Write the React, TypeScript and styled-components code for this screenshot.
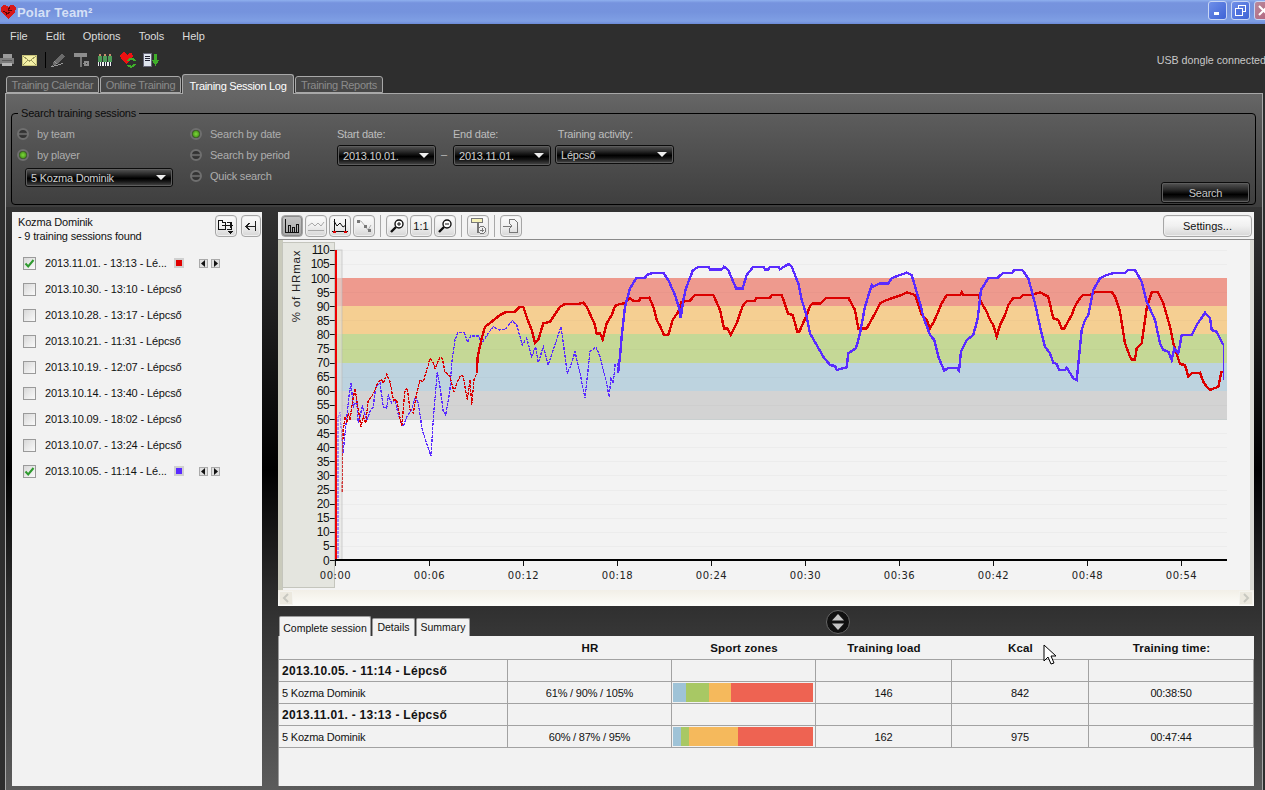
import React from "react";
import styled, { createGlobalStyle } from "styled-components";

const GlobalStyle = createGlobalStyle`
  html, body { margin: 0; padding: 0; background: #2e2e2e; }
  * { box-sizing: border-box; }
`;

const UI_FONT = `"Liberation Sans", Arial, sans-serif`;

const Window = styled.div`
  position: relative;
  width: 1265px;
  height: 790px;
  overflow: hidden;
  display: flex;
  flex-direction: column;
  background: #2e2e2e;
  font-family: ${UI_FONT};
  font-size: 11px;
`;

const TitleBar = styled.div`
  height: 24px;
  flex: none;
  display: flex;
  align-items: center;
  background: linear-gradient(to bottom, #8fb0ee 0, #7693de 12%, #7593dd 50%, #7f9fe4 88%, #6c8ad8 100%);
`;

const AppName = styled.span`
  margin-left: 1px;
  font-size: 13px;
  font-weight: bold;
  letter-spacing: 0.2px;
  color: #d5e0f6;
`;

const WindowButtons = styled.div`
  margin-left: auto;
  margin-right: -8px;
  display: flex;
  gap: 4px;
  align-self: flex-start;
  margin-top: 1px;
`;

const WindowButton = styled.div<{ $close?: boolean }>`
  width: 19px;
  height: 19px;
  border: 1px solid #c8d6f5;
  border-radius: 3px;
  background: ${(p) => (p.$close ? "linear-gradient(135deg, #b98a9c, #b0607a)" : "linear-gradient(135deg, #6f8fe8, #3e63d6)")};
  display: flex;
  align-items: center;
  justify-content: center;
  color: #fff;
`;

const MenuBar = styled.div`
  height: 21px;
  flex: none;
  display: flex;
  align-items: center;
  gap: 18px;
  padding: 2px 0 0 10px;
  color: #dcdcdc;
  font-size: 11px;
`;

const ToolStrip = styled.div`
  height: 29px;
  flex: none;
  display: flex;
  align-items: center;
  padding-top: 1px;
`;

const StripIcon = styled.svg<{ $left: number }>`
  width: 16px;
  height: 16px;
  margin-left: ${(p) => p.$left}px;
  flex: none;
  shape-rendering: crispEdges;
`;

const StripDivider = styled.div`
  width: 1px;
  height: 16px;
  margin-left: 7px;
  background: #000;
  flex: none;
`;

const DongleStatus = styled.span`
  margin-left: auto;
  margin-right: -1px;
  color: #c8c8c8;
  font-size: 10.7px;
  white-space: nowrap;
`;

const TopTabs = styled.div`
  height: 19px;
  flex: none;
  display: flex;
  align-items: flex-end;
  padding-left: 6px;
  gap: 1px;
  position: relative;
  z-index: 1;
`;

const TopTab = styled.div<{ $active?: boolean; $width: number }>`
  width: ${(p) => p.$width}px;
  height: ${(p) => (p.$active ? 20 : 17)}px;
  margin-bottom: ${(p) => (p.$active ? -1 : 0)}px;
  padding-top: ${(p) => (p.$active ? 3 : 0)}px;
  border: 1px solid #a8a8a8;
  border-bottom: ${(p) => (p.$active ? "none" : "1px solid #a8a8a8")};
  border-radius: 3px 3px 0 0;
  background: ${(p) => (p.$active ? "#666" : "#474747")};
  color: ${(p) => (p.$active ? "#fff" : "#8b8b8b")};
  font-size: 11px;
  letter-spacing: -0.3px;
  display: flex;
  align-items: center;
  justify-content: center;
  white-space: nowrap;
`;

const TabPanel = styled.div`
  flex: 1;
  min-height: 0;
  margin: 0 2px 0 5px;
  border: 1px solid #a8a8a8;
  border-bottom: none;
  display: flex;
  flex-direction: column;
`;

const SearchArea = styled.div`
  height: 113px;
  flex: none;
  padding: 12px 6px 0 5px;
  background: linear-gradient(to bottom, #666 0, #5a5a5a 25%, #3e3e3e 100%);
`;

const SearchBox = styled.fieldset`
  margin: 0;
  padding: 0 5px 2px 5px;
  height: 99px;
  border: 1px solid #000;
  border-radius: 4px;
  min-width: 0;
`;

const SearchLegend = styled.legend`
  padding: 0 3px;
  margin-left: 1px;
  height: 14px;
  line-height: 14px;
  color: #0c0c0c;
  font-size: 11px;
  letter-spacing: -0.2px;
`;

const SearchRow = styled.div`
  display: flex;
  height: 83px;
  padding-top: 8px;
  align-items: flex-start;
  letter-spacing: -0.22px;
`;

const RadioColumn = styled.div<{ $width: number }>`
  width: ${(p) => p.$width}px;
  flex: none;
  display: flex;
  flex-direction: column;
  gap: 9px;
`;

const RadioLine = styled.div`
  height: 12px;
  display: flex;
  align-items: center;
  gap: 8px;
  color: #adadad;
  white-space: nowrap;
`;

const RadioDot = styled.span<{ $on?: boolean }>`
  width: 12px;
  height: 12px;
  flex: none;
  border-radius: 50%;
  border: 2px solid #6f6f6f;
  background: ${(p) =>
    p.$on
      ? "radial-gradient(circle, #7fd63c 0, #55a822 45%, #2c3a22 75%)"
      : "linear-gradient(to bottom, #333 0, #333 30%, #666 45%, #666 55%, #333 70%)"};
`;

const Combo = styled.div<{ $width: number; $height?: number }>`
  width: ${(p) => p.$width}px;
  height: ${(p) => p.$height ?? 21}px;
  flex: none;
  border: 1px solid #0c0c0c;
  border-radius: 3px;
  outline: 1px solid #5d5d5d;
  outline-offset: -2px;
  background: linear-gradient(to bottom, #575757 0, #2a2a2a 30%, #000 55%, #111 70%, #4a4a4a 100%);
  color: #cfcfcf;
  display: flex;
  align-items: center;
  padding: 0 6px 0 5px;
  white-space: nowrap;
  font-size: 11px;
`;

const ComboArrow = styled.span`
  margin-left: auto;
  width: 0;
  height: 0;
  border-left: 5px solid transparent;
  border-right: 5px solid transparent;
  border-top: 5px solid #eee;
`;

const PlayerCombo = styled(Combo)`
  margin: -2px 0 0 8px;
`;

const FieldColumn = styled.div<{ $left: number }>`
  flex: none;
  margin-left: ${(p) => p.$left}px;
  display: flex;
  flex-direction: column;
  gap: 5px;
  color: #bdbdbd;
  white-space: nowrap;
`;

const FieldDash = styled.span`
  flex: none;
  margin: 20px 0 0 5px;
  color: #bdbdbd;
  width: 11px;
`;

const SearchButton = styled.div`
  margin-left: auto;
  align-self: flex-end;
  width: 89px;
  height: 21px;
  flex: none;
  border: 1px solid #0c0c0c;
  border-radius: 3px;
  outline: 1px solid #5d5d5d;
  outline-offset: -2px;
  background: linear-gradient(to bottom, #555 0, #2a2a2a 35%, #000 60%, #111 75%, #444 100%);
  color: #c4c4c4;
  display: flex;
  align-items: center;
  justify-content: center;
`;

const Body = styled.div`
  flex: 1;
  min-height: 0;
  display: flex;
  gap: 16px;
  padding: 5px 0 4px 6px;
  background: linear-gradient(to bottom, #333 0, #000 45%, #2c2c2c 66%, #5c5c5c 100%);
`;

const SessionPanel = styled.div`
  width: 250px;
  flex: none;
  background: #f2f2f2;
  color: #111;
  display: flex;
  flex-direction: column;
`;

const SessionHeader = styled.div`
  height: 38px;
  flex: none;
  display: flex;
  padding: 3px 1px 0 6px;
`;

const SessionTitle = styled.div`
  line-height: 13.5px;
  padding-top: 1px;
  font-size: 11px;
  letter-spacing: -0.18px;
`;

const HeaderButtons = styled.div`
  margin-left: auto;
  display: flex;
  gap: 4px;
`;

const SessionList = styled.div`
  display: flex;
  flex-direction: column;
  gap: 6px;
  padding: 3px 0 0 11px;
`;

const SessionRow = styled.div`
  height: 20px;
  display: flex;
  align-items: center;
  white-space: nowrap;
  font-size: 11px;
  letter-spacing: -0.15px;
`;

const CheckBox = styled.span`
  width: 13px;
  height: 13px;
  flex: none;
  margin-right: 9px;
  border: 1px solid #9a9a9a;
  background: linear-gradient(135deg, #d8d8d8, #fafafa);
  display: flex;
  align-items: center;
  justify-content: center;
`;

const Swatch = styled.span<{ $color: string }>`
  width: 10px;
  height: 10px;
  flex: none;
  margin-left: 7px;
  border: 2px solid #d0d0d0;
  background: ${(p) => p.$color};
`;

const StepButton = styled.span`
  width: 9px;
  height: 9px;
  flex: none;
  border: 1px solid #aaa;
  background: #e0e0e0;
  display: flex;
  align-items: center;
  justify-content: center;
`;

const StepGroup = styled.span`
  display: flex;
  gap: 3px;
  margin-left: 15px;
`;

const MainColumn = styled.div`
  width: 976px;
  flex: none;
  display: flex;
  flex-direction: column;
`;

const ChartToolbar = styled.div`
  height: 28px;
  flex: none;
  display: flex;
  align-items: flex-start;
  gap: 2px;
  padding: 3px 2px 0 3px;
  background: #f3f3f3;
  border-bottom: 1px solid #8a8a8a;
`;

const ToolButton = styled.div<{ $active?: boolean }>`
  width: 22px;
  height: 22px;
  flex: none;
  border: 1px solid #a6a6a6;
  border-radius: 4px;
  background: ${(p) =>
    p.$active ? "linear-gradient(to bottom, #c4c4c4, #a8a8a8)" : "linear-gradient(to bottom, #fbfbfb 0, #f0f0f0 50%, #d6d6d6 100%)"};
  display: flex;
  align-items: center;
  justify-content: center;
  color: #111;
  font-size: 11px;
  box-shadow: ${(p) => (p.$active ? "inset 0 0 0 1px #8c8c8c" : "inset 0 0 0 1px #efefef")};
`;

const ToolSeparator = styled.div`
  width: 1px;
  height: 22px;
  flex: none;
  margin: 0 3px;
  background: #a8a8a8;
`;

const SettingsButton = styled(ToolButton)`
  width: 89px;
  margin-left: auto;
`;

const NarrowButton = styled(ToolButton)`
  width: 20px;
`;

const ChartFrame = styled.svg`
  width: 976px;
  height: 350px;
  flex: none;
  display: block;
  background: #f3f3f3;
`;

const ScrollRow = styled.div`
  height: 16px;
  flex: none;
  display: flex;
  justify-content: space-between;
  padding: 1px 1px 0;
  background: linear-gradient(to bottom, #f2efe7, #fdfdfa);
`;

const ScrollButton = styled.div`
  width: 14px;
  height: 14px;
  background: #ece9df;
  border: 1px solid #f4f3ee;
  display: flex;
  align-items: center;
  justify-content: center;
`;

const LowerStrip = styled.div`
  height: 30px;
  flex: none;
  display: flex;
  align-items: flex-end;
  padding-left: 1px;
`;

const LowerTab = styled.div<{ $active?: boolean; $width: number }>`
  width: ${(p) => p.$width}px;
  height: ${(p) => (p.$active ? 20 : 18)}px;
  margin-right: 1px;
  padding: ${(p) => (p.$active ? "3px 0 0" : "0 0 1px")};
  background: #f2f2f2;
  border: 1px solid #9a9a9a;
  border-bottom: none;
  border-radius: 2px 2px 0 0;
  color: #111;
  font-size: 10.5px;
  display: flex;
  align-items: center;
  justify-content: center;
  white-space: nowrap;
`;

const SplitHandle = styled.svg`
  width: 24px;
  height: 24px;
  flex: none;
  align-self: flex-start;
  margin: 4px 0 0 355px;
`;

const SummaryTable = styled.div`
  height: 150px;
  flex: none;
  background: #f2f2f2;
  border-left: 1px solid #9a9a9a;
  color: #111;
`;

const TableRow = styled.div<{ $header?: boolean }>`
  display: grid;
  grid-template-columns: 229px 164px 144px 136px 137px 165px;
  height: ${(p) => (p.$header ? 24 : 22)}px;
`;

const TableCell = styled.div<{ $header?: boolean; $bold?: boolean; $left?: boolean }>`
  display: flex;
  align-items: center;
  justify-content: ${(p) => (p.$left ? "flex-start" : "center")};
  padding-left: ${(p) => (p.$left ? 3 : 0)}px;
  border-bottom: 1px solid #a2a2a2;
  border-right: ${(p) => (p.$header ? "none" : "1px solid #a2a2a2")};
  font-weight: ${(p) => (p.$header || p.$bold ? "bold" : "normal")};
  font-size: ${(p) => (p.$bold ? 12 : p.$header ? 11.5 : 11)}px;
  letter-spacing: ${(p) => (p.$bold ? 0.3 : p.$header ? 0.15 : -0.2)}px;
  white-space: nowrap;
`;

const ZoneBar = styled.div`
  display: flex;
  width: 140px;
  height: 19px;
  margin-right: 2px;
`;

const ZoneSegment = styled.div<{ $color: string; $width: number }>`
  width: ${(p) => p.$width}px;
  background: ${(p) => p.$color};
`;

const MouseCursor = styled.svg`
  position: absolute;
  left: 1043px;
  top: 644px;
  width: 14px;
  height: 22px;
`;

/* chart data, read off in page pixels through a crop origin at 3x */
const crop = (x0: number, y0: number, pts: number[][]) =>
  pts.map(([x, y]) => [x0 + x / 3, y0 + y / 3]);

const toPoints = (pts: number[][]) => pts.map(([x, y]) => `${x.toFixed(1)},${y.toFixed(1)}`).join(" ");

const redDashed = [
  [342, 492],
  [343, 430],
  ...crop(275, 210, [
    [205, 660], [210, 620], [215, 640], [220, 610], [225, 630], [232, 580], [240, 535], [245, 570], [250, 600],
    [258, 650], [265, 620], [272, 640], [280, 570], [290, 560], [300, 540], [310, 515], [320, 510], [325, 520],
    [335, 492], [345, 515], [355, 570], [365, 570], [380, 650], [390, 540], [397, 535], [405, 600], [415, 610],
    [425, 550], [435, 510], [445, 515], [465, 445], [475, 460], [480, 475], [495, 442], [502, 445], [510, 485],
    [525, 500], [537, 545], [545, 520], [557, 495], [565, 500], [577, 570], [585, 510], [590, 585], [597, 510],
    [605, 490],
  ]),
];

const redSolid = [
  ...crop(275, 210, [
    [605, 490], [608, 440], [620, 385], [630, 350], [650, 335], [675, 315], [695, 305], [720, 305], [735, 290],
    [745, 290], [760, 335], [770, 360], [780, 398], [790, 390], [805, 340], [825, 335], [855, 290], [870, 282],
    [910, 282], [925, 278], [935, 290], [960, 345], [965, 372],
  ]),
  ...crop(600, 240, [
    [0, 280], [8, 298], [20, 250], [35, 225], [45, 198], [60, 192], [75, 190], [90, 175], [100, 182], [118, 182],
    [120, 175], [148, 173], [160, 200], [170, 240], [180, 258], [192, 285], [205, 285], [218, 240], [235, 215],
    [245, 185], [270, 182], [285, 165], [340, 165], [360, 210], [372, 265], [382, 265], [392, 285], [410, 250],
    [428, 198], [440, 183], [465, 182], [470, 173], [510, 173], [515, 165], [545, 165], [565, 222], [578, 225],
    [592, 275], [598, 275], [620, 225], [630, 198], [640, 190], [662, 190], [678, 173], [745, 173], [765, 210],
    [775, 265], [800, 265], [828, 215], [840, 190], [855, 182], [880, 173], [905, 165], [920, 157], [945, 165],
    [965, 225], [980, 240],
  ]),
  ...crop(925, 240, [
    [15, 265], [25, 248], [40, 215], [50, 190], [65, 165], [105, 165], [110, 157], [115, 165], [160, 165],
    [170, 190], [185, 215], [195, 240], [205, 255], [215, 290], [225, 255], [240, 225], [250, 195], [265, 173],
    [285, 173], [295, 165], [320, 165], [345, 157], [360, 165], [370, 170], [385, 235], [400, 240], [410, 265],
    [418, 265], [440, 225], [450, 198], [465, 175], [475, 165], [495, 165], [512, 155], [545, 155], [560, 155],
    [570, 170], [585, 215], [600, 310], [615, 350], [620, 358], [630, 358], [635, 325], [650, 310], [665, 205],
    [680, 157], [698, 155], [715, 190], [735, 260], [745, 310], [765, 372], [780, 375], [790, 410], [800, 400],
    [825, 398], [835, 425], [845, 440], [855, 450], [880, 440], [890, 392],
  ]),
];

const blueDashed = [
  [338, 558],
  [338, 418],
  [340, 412],
  [343, 453],
  ...crop(275, 210, [
    [212, 650], [222, 560], [228, 518], [235, 590], [245, 570], [250, 640], [262, 590], [275, 630], [285, 605],
    [295, 590], [302, 530], [315, 520], [325, 590], [335, 595], [340, 555], [350, 580], [360, 570], [370, 615],
    [385, 650], [395, 620], [410, 600], [420, 560], [430, 580], [442, 660],
  ]),
  [431, 456],
  ...crop(275, 210, [
    [475, 625], [487, 485], [495, 530], [505, 605], [512, 615], [525, 540], [530, 460], [540, 390], [548, 368],
    [568, 368], [578, 398], [587, 378], [610, 378], [620, 400], [640, 370], [655, 350], [672, 360], [690, 358],
    [712, 332], [725, 345], [742, 405], [755, 385], [770, 440], [782, 410], [790, 458], [805, 410], [820, 465],
    [835, 420], [858, 350], [865, 400], [877, 490], [888, 465], [900, 425], [915, 490], [930, 565], [945, 425],
    [963, 410],
  ]),
  ...crop(600, 240, [
    [0, 350], [10, 390], [20, 430], [27, 470], [33, 415], [40, 430], [45, 375], [52, 372], [54, 400],
  ]),
];

const blueSolid = [
  ...crop(600, 240, [
    [54, 400], [60, 350], [65, 290], [75, 200], [90, 145], [110, 113], [135, 113], [140, 105], [160, 98], [190, 98],
    [205, 120], [225, 165], [238, 205], [242, 235], [250, 180], [258, 145], [278, 92], [295, 80], [325, 80],
    [330, 88], [365, 88], [372, 80], [385, 90], [408, 145], [428, 145], [440, 105], [460, 80], [490, 80], [495, 88],
    [505, 88], [510, 80], [535, 80], [540, 88], [565, 72], [575, 80], [595, 130], [605, 180], [618, 220], [630, 280],
    [650, 315], [670, 350], [690, 375], [705, 378], [710, 390], [740, 382], [745, 340], [768, 325], [780, 280],
    [795, 200], [815, 135], [820, 140], [840, 130], [865, 130], [875, 115], [900, 105], [920, 98], [935, 105],
    [960, 190], [970, 230],
  ]),
  ...crop(925, 240, [
    [15, 285], [28, 300], [40, 350], [58, 392], [68, 385], [95, 383], [102, 392], [108, 335], [125, 300], [145, 285],
    [158, 235], [168, 150], [190, 115], [218, 113], [235, 98], [262, 98], [268, 90], [292, 90], [310, 115], [330, 190],
    [345, 260], [360, 320], [375, 340], [385, 368], [395, 372], [402, 390], [420, 390], [425, 383], [445, 415],
    [455, 420], [462, 350], [470, 270], [480, 240], [490, 225], [505, 150], [525, 115], [545, 105], [570, 98],
    [600, 98], [610, 90], [630, 90], [650, 125], [665, 185], [690, 240], [705, 310], [715, 330], [730, 335],
    [740, 360], [748, 325], [760, 340], [770, 285], [800, 285], [815, 255], [840, 218], [855, 235], [860, 270],
    [875, 275], [895, 315],
  ]),
];

const blueTail = crop(925, 240, [[895, 315], [895, 420]]);

const valueY = (v: number) => 560 - v * 2.82;

const zones = [
  { from: 90, to: 100, color: "#ee9a8e", edge: "#ecb18e" },
  { from: 80, to: 90, color: "#f5cf92", edge: "#ecbf88" },
  { from: 70, to: 80, color: "#c5d896", edge: "#bccf94" },
  { from: 60, to: 70, color: "#bdd3df", edge: "#b4c9d0" },
  { from: 50, to: 60, color: "#d3d3d3", edge: "#c9cfcf" },
];

const yTicks = Array.from({ length: 23 }, (_, i) => i * 5);
const xLabels = ["00:00", "00:06", "00:12", "00:18", "00:24", "00:30", "00:36", "00:42", "00:48", "00:54"];

function HrChart() {
  return (
    <ChartFrame viewBox="278 240 976 350">
      <rect x="278" y="240" width="5" height="350" fill="#c9cabc" />
      <rect x="282.5" y="242.5" width="52" height="345" fill="#e4e5df" stroke="#c4c5bd" />
      <rect x="1250" y="240" width="4" height="350" fill="#dcdcd6" />

      {yTicks.map((v) => (
        <line key={v} x1="335" x2="1227" y1={valueY(v) + 0.5} y2={valueY(v) + 0.5} stroke="#ececec" shapeRendering="crispEdges" />
      ))}
      {zones.map((z) => (
        <g key={z.from} shapeRendering="crispEdges">
          <rect x="335" y={valueY(z.to)} width="892" height={valueY(z.from) - valueY(z.to)} fill={z.color} />
          <line x1="335" x2="1227" y1={valueY(z.from) + 0.5} y2={valueY(z.from) + 0.5} stroke={z.edge} />
          <line x1="335" x2="1227" y1={valueY(z.from + 5) + 0.5} y2={valueY(z.from + 5) + 0.5} stroke="#000" strokeOpacity="0.02" />
        </g>
      ))}

      {yTicks.map((v) => (
        <g key={v}>
          <line x1="330" x2="335" y1={valueY(v) + 0.5} y2={valueY(v) + 0.5} stroke="#111" shapeRendering="crispEdges" />
          <text x="329" y={valueY(v) + 4.5} textAnchor="end" fontFamily={UI_FONT} fontSize="12" letterSpacing="-0.6" fill="#111">
            {v}
          </text>
        </g>
      ))}
      <text
        transform="translate(300 286) rotate(-90)"
        textAnchor="middle"
        fontFamily={UI_FONT}
        fontSize="11.5"
        letterSpacing="0.8"
        fill="#222"
      >
        % of HRmax
      </text>

      <polyline points={toPoints(blueDashed)} fill="none" stroke="#5a2bff" strokeWidth="1.3" strokeDasharray="3 1" shapeRendering="crispEdges" />
      <polyline points={toPoints(redDashed)} fill="none" stroke="#dc0000" strokeWidth="1.3" strokeDasharray="3 1" shapeRendering="crispEdges" />
      <polyline points={toPoints(redSolid)} fill="none" stroke="#dc0000" strokeWidth="2.4" shapeRendering="crispEdges" />
      <polyline points={toPoints(blueSolid)} fill="none" stroke="#5a2bff" strokeWidth="2.4" shapeRendering="crispEdges" />
      <polyline points={toPoints(blueTail)} fill="none" stroke="#5a2bff" strokeWidth="1" shapeRendering="crispEdges" />

      <rect x="335" y="250" width="7" height="310" fill="#e2e2de" fillOpacity="0.55" stroke="#b8b8b8" strokeOpacity="0.6" />
      <rect x="335" y="250" width="2" height="310" fill="#ee0000" shapeRendering="crispEdges" />

      <rect x="335" y="559" width="892" height="2" fill="#000" shapeRendering="crispEdges" />
      {xLabels.map((label, i) => {
        const x = 335.5 + i * 94;
        return (
          <g key={label}>
            <line x1={x} x2={x} y1="561" y2="566" stroke="#111" shapeRendering="crispEdges" />
            <text x={x} y="579" textAnchor="middle" fontFamily={`"DejaVu Sans", sans-serif`} fontSize="10" letterSpacing="0.5" fill="#222">
              {label}
            </text>
          </g>
        );
      })}
    </ChartFrame>
  );
}

const sessions = [
  { label: "2013.11.01. - 13:13 - Lé...", checked: true, color: "#e00000" },
  { label: "2013.10.30. - 13:10 - Lépcső" },
  { label: "2013.10.28. - 13:17 - Lépcső" },
  { label: "2013.10.21. - 11:31 - Lépcső" },
  { label: "2013.10.19. - 12:07 - Lépcső" },
  { label: "2013.10.14. - 13:40 - Lépcső" },
  { label: "2013.10.09. - 18:02 - Lépcső" },
  { label: "2013.10.07. - 13:24 - Lépcső" },
  { label: "2013.10.05. - 11:14 - Lé...", checked: true, color: "#5a2bff" },
];

const resultRows = [
  {
    title: "2013.10.05. - 11:14 - Lépcső",
    hr: "61% / 90% / 105%",
    zones: [13, 23, 22, 82],
    load: "146",
    kcal: "842",
    time: "00:38:50",
  },
  {
    title: "2013.11.01. - 13:13 - Lépcső",
    hr: "60% / 87% / 95%",
    zones: [8, 8, 49, 75],
    load: "162",
    kcal: "975",
    time: "00:47:44",
  },
];

const zoneColors = ["#9fc3d7", "#a8c864", "#f5b95c", "#ee6352"];

const HeartIcon = () => (
  <StripIcon $left={0} viewBox="0 0 16 16">
    <path d="M1 3 L4 1 L7 2 L8 3 L10 1 L14 1 L16 4 L15 8 L8 15 L1 8 Z" fill="#d81818" />
    <path d="M3 7 L7 9 L6 11 L10 8 M10 3 L8 6 L12 7" fill="none" stroke="#5a0606" />
  </StripIcon>
);

function App() {
  return (
    <Window>
      <GlobalStyle />
      <TitleBar>
        <HeartIcon />
        <AppName>Polar Team²</AppName>
        <WindowButtons>
          <WindowButton>
            <svg width="9" height="9" viewBox="0 0 9 9">
              <rect x="1" y="6" width="5" height="3" fill="#fff" />
            </svg>
          </WindowButton>
          <WindowButton>
            <svg width="11" height="11" viewBox="0 0 11 11" shapeRendering="crispEdges">
              <rect x="3.5" y="0.5" width="7" height="6" fill="none" stroke="#fff" />
              <rect x="0.5" y="3.5" width="7" height="7" fill="#4c70dc" stroke="#fff" />
            </svg>
          </WindowButton>
          <WindowButton $close>
            <svg width="11" height="11" viewBox="0 0 11 11">
              <path d="M1 1 L10 10 M10 1 L1 10" stroke="#fff" strokeWidth="2" />
            </svg>
          </WindowButton>
        </WindowButtons>
      </TitleBar>

      <MenuBar>
        <span>File</span>
        <span>Edit</span>
        <span>Options</span>
        <span>Tools</span>
        <span>Help</span>
      </MenuBar>

      <ToolStrip>
        <StripIcon $left={-1} viewBox="0 0 16 16">
          <path d="M4 2 H13 V6 H4 Z" fill="#9a9a9a" />
          <path d="M1 6 H15 V12 H1 Z" fill="#7d7d7d" />
          <path d="M3 11 H13 V14 H3 Z" fill="#b4b4b4" />
          <path d="M3 8 H13 V9 H3 Z" fill="#5a5a5a" />
        </StripIcon>
        <StripIcon $left={7} viewBox="0 0 16 16">
          <rect x="0.5" y="3.5" width="14" height="10" fill="#f4f0a6" stroke="#c9c47c" />
          <path d="M1 4 L7.5 9 L14 4 M1 13 L6 8 M14 13 L9 8" fill="none" stroke="#9d9a5e" />
        </StripIcon>
        <StripDivider />
        <StripIcon $left={4} viewBox="0 0 16 16">
          <path d="M2 14 L4 9 L12 2 L15 4 L7 12 Z" fill="#6b6b6b" />
          <path d="M4 9 L7 12 M1 15 C5 13 9 14 13 11" fill="none" stroke="#999" />
        </StripIcon>
        <StripIcon $left={8} viewBox="0 0 16 16">
          <rect x="0" y="1" width="13" height="4" fill="#8d8d8d" />
          <rect x="6" y="5" width="2" height="10" fill="#777" />
          <circle cx="12.5" cy="11.5" r="3" fill="#8d8d8d" />
          <circle cx="12.5" cy="11.5" r="1" fill="#333" />
        </StripIcon>
        <StripIcon $left={7} viewBox="0 0 16 16">
          <path d="M1 4 H5 V10 H1 Z M6 4 H10 V10 H6 Z M11 4 H15 V10 H11 Z" fill="#4d9a58" />
          <path d="M2 2 H4 V4 H2 Z M7 2 H9 V4 H7 Z M12 2 H14 V4 H12 Z" fill="#c98f6b" />
          <path d="M1 10 H15 V14 H1 Z" fill="#eee" />
          <path d="M2 10 V14 M4 10 V14 M7 10 V14 M9 10 V14 M12 10 V14 M14 10 V14" stroke="#223" />
        </StripIcon>
        <StripIcon $left={7} viewBox="0 0 16 16">
          <path d="M0 3 L3 0 L6 1 L7 3 L9 1 L12 1 L13 4 L11 8 L6 12 L1 7 Z" fill="#ee1111" />
          <path d="M8 9 A4 4 0 0 1 15 9 M15 12 A4 4 0 0 1 8 13" fill="none" stroke="#3fae2a" strokeWidth="2" />
        </StripIcon>
        <StripIcon $left={7} viewBox="0 0 16 16">
          <rect x="0.5" y="1.5" width="8" height="13" fill="#dfe5ee" stroke="#667" />
          <path d="M2 4 H7 M2 6 H7 M2 8 H7" stroke="#223" />
          <path d="M11 2 H14 V8 H16 L12.5 14 L9 8 H11 Z" fill="#3fae2a" />
        </StripIcon>
        <DongleStatus>USB dongle connected</DongleStatus>
      </ToolStrip>

      <TopTabs>
        <TopTab $width={93}>Training Calendar</TopTab>
        <TopTab $width={81}>Online Training</TopTab>
        <TopTab $width={112} $active>
          Training Session Log
        </TopTab>
        <TopTab $width={88}>Training Reports</TopTab>
      </TopTabs>

      <TabPanel>
        <SearchArea>
          <SearchBox>
            <SearchLegend>Search training sessions</SearchLegend>
            <SearchRow>
              <RadioColumn $width={173}>
                <RadioLine>
                  <RadioDot />
                  by team
                </RadioLine>
                <RadioLine>
                  <RadioDot $on />
                  by player
                </RadioLine>
                <PlayerCombo $width={148} $height={19}>
                  5 Kozma Dominik
                  <ComboArrow />
                </PlayerCombo>
              </RadioColumn>
              <RadioColumn $width={147}>
                <RadioLine>
                  <RadioDot $on />
                  Search by date
                </RadioLine>
                <RadioLine>
                  <RadioDot />
                  Search by period
                </RadioLine>
                <RadioLine>
                  <RadioDot />
                  Quick search
                </RadioLine>
              </RadioColumn>
              <FieldColumn $left={0}>
                <span>Start date:</span>
                <Combo $width={99}>
                  2013.10.01.
                  <ComboArrow />
                </Combo>
              </FieldColumn>
              <FieldDash>–</FieldDash>
              <FieldColumn $left={1}>
                <span>End date:</span>
                <Combo $width={98}>
                  2013.11.01.
                  <ComboArrow />
                </Combo>
              </FieldColumn>
              <FieldColumn $left={4}>
                <span>&nbsp;Training activity:</span>
                <Combo $width={119} $height={19}>
                  Lépcső
                  <ComboArrow />
                </Combo>
              </FieldColumn>
              <SearchButton>Search</SearchButton>
            </SearchRow>
          </SearchBox>
        </SearchArea>

        <Body>
          <SessionPanel>
            <SessionHeader>
              <SessionTitle>
                Kozma Dominik
                <br />- 9 training sessions found
              </SessionTitle>
              <HeaderButtons>
                <ToolButton>
                  <svg width="18" height="18" viewBox="0 0 18 18" shapeRendering="crispEdges">
                    <path d="M1.5 3.5 H5.5 V5.5 H8.5 V12.5 H1.5 Z M9.5 5.5 H14.5 V12.5 H9.5" fill="none" stroke="#111" />
                    <path d="M5 8.5 H15 M13 6.5 L15 8.5 L13 10.5" fill="none" stroke="#111" />
                    <path d="M11 14 H16 L13.5 17 Z" fill="#111" />
                  </svg>
                </ToolButton>
                <NarrowButton>
                  <svg width="14" height="14" viewBox="0 0 14 14" shapeRendering="crispEdges">
                    <path d="M11.5 2 V12 M2 7.5 H11 M5.5 4 L2 7.5 L5.5 11" fill="none" stroke="#222" />
                  </svg>
                </NarrowButton>
              </HeaderButtons>
            </SessionHeader>
            <SessionList>
              {sessions.map((s) => (
                <SessionRow key={s.label + s.color}>
                  <CheckBox>
                    {s.checked && (
                      <svg width="11" height="11" viewBox="0 0 11 11">
                        <path d="M1.5 5.5 L4.2 8.5 L9.5 2" fill="none" stroke="#2e9a2e" strokeWidth="2" />
                      </svg>
                    )}
                  </CheckBox>
                  {s.label}
                  {s.color && <Swatch $color={s.color} />}
                  {s.color && (
                    <StepGroup>
                      <StepButton>
                        <svg width="5" height="7" viewBox="0 0 5 7">
                          <path d="M4 0 V7 L0 3.5 Z" fill="#111" />
                        </svg>
                      </StepButton>
                      <StepButton>
                        <svg width="5" height="7" viewBox="0 0 5 7">
                          <path d="M1 0 V7 L5 3.5 Z" fill="#111" />
                        </svg>
                      </StepButton>
                    </StepGroup>
                  )}
                </SessionRow>
              ))}
            </SessionList>
          </SessionPanel>

          <MainColumn>
            <ChartToolbar>
              <ToolButton $active>
                <svg width="16" height="16" viewBox="0 0 16 16" shapeRendering="crispEdges">
                  <path d="M1.5 1 V14.5 H15 M4.5 14 V7.5 H6.5 V14 M8.5 14 V9.5 H10.5 V14 M12.5 14 V6.5 H14.5 V14" fill="none" stroke="#111" />
                </svg>
              </ToolButton>
              <ToolButton>
                <svg width="18" height="16" viewBox="0 0 18 16">
                  <path d="M1 12.5 H17 M1 8 L5 5 L8 8 L11 5 L14 8 L17 4" fill="none" stroke="#a8a8a8" />
                </svg>
              </ToolButton>
              <ToolButton>
                <svg width="18" height="16" viewBox="0 0 18 16">
                  <path d="M3.5 1 V14.5 M14.5 1 V14.5 M1 13.5 H17 M3 3 L6 8 L9 5 L12 9 L15 7" fill="none" stroke="#111" />
                  <rect x="2" y="13" width="3" height="2" fill="#d00" />
                  <rect x="13" y="13" width="3" height="2" fill="#d00" />
                </svg>
              </ToolButton>
              <ToolButton>
                <svg width="18" height="16" viewBox="0 0 18 16">
                  <path d="M2 3 L6 3 L10 8 L13 12 L16 7" fill="none" stroke="#b0b0b0" />
                  <rect x="2" y="2" width="3" height="3" fill="#777" />
                  <rect x="9" y="7" width="3" height="3" fill="#777" />
                  <rect x="13" y="11" width="3" height="3" fill="#777" />
                </svg>
              </ToolButton>
              <ToolSeparator />
              <ToolButton>
                <svg width="16" height="16" viewBox="0 0 16 16">
                  <circle cx="10" cy="6" r="4" fill="#fff" stroke="#111" strokeWidth="1.4" />
                  <path d="M7 9 L2 14" stroke="#111" strokeWidth="2.4" />
                  <path d="M8 6 H12 M10 4 V8" stroke="#111" />
                </svg>
              </ToolButton>
              <ToolButton>1:1</ToolButton>
              <ToolButton>
                <svg width="16" height="16" viewBox="0 0 16 16">
                  <circle cx="10" cy="6" r="4" fill="#fff" stroke="#111" strokeWidth="1.4" />
                  <path d="M7 9 L2 14" stroke="#111" strokeWidth="2.4" />
                  <path d="M8 6 H12" stroke="#111" />
                </svg>
              </ToolButton>
              <ToolSeparator />
              <ToolButton>
                <svg width="18" height="18" viewBox="0 0 18 18" shapeRendering="crispEdges">
                  <rect x="2.5" y="1.5" width="11" height="4" fill="#f6f2b8" stroke="#777" />
                  <path d="M8.5 6 V16" stroke="#777" strokeWidth="2" />
                  <circle cx="13" cy="13" r="3.5" fill="#eee" stroke="#777" />
                  <path d="M11 13 H15 M13 11 V15" stroke="#777" />
                </svg>
              </ToolButton>
              <ToolSeparator />
              <ToolButton>
                <svg width="18" height="18" viewBox="0 0 18 18" shapeRendering="crispEdges">
                  <path d="M7.5 7 V2.5 H12.5 L15.5 5.5 V15.5 H7.5 V11" fill="none" stroke="#777" />
                  <path d="M1 9 H10 M8 7 L10 9 L8 11" fill="none" stroke="#777" />
                </svg>
              </ToolButton>
              <SettingsButton>Settings...</SettingsButton>
            </ChartToolbar>

            <HrChart />

            <ScrollRow>
              <ScrollButton>
                <svg width="8" height="10" viewBox="0 0 8 10">
                  <path d="M6 1 L2 5 L6 9" fill="none" stroke="#c8c8c0" strokeWidth="2" />
                </svg>
              </ScrollButton>
              <ScrollButton>
                <svg width="8" height="10" viewBox="0 0 8 10">
                  <path d="M2 1 L6 5 L2 9" fill="none" stroke="#c8c8c0" strokeWidth="2" />
                </svg>
              </ScrollButton>
            </ScrollRow>

            <LowerStrip>
              <LowerTab $active $width={92}>
                Complete session
              </LowerTab>
              <LowerTab $width={43}>Details</LowerTab>
              <LowerTab $width={54}>Summary</LowerTab>
              <SplitHandle viewBox="0 0 24 24">
                <circle cx="12" cy="12" r="11.5" fill="#111" stroke="#666" />
                <path d="M12 4 L18 10.5 H6 Z" fill="#c4c4c4" />
                <path d="M12 20 L18 13.5 H6 Z" fill="#c4c4c4" />
              </SplitHandle>
            </LowerStrip>

            <SummaryTable>
              <TableRow $header>
                <TableCell $header />
                <TableCell $header>HR</TableCell>
                <TableCell $header>Sport zones</TableCell>
                <TableCell $header>Training load</TableCell>
                <TableCell $header>Kcal</TableCell>
                <TableCell $header>Training time:</TableCell>
              </TableRow>
              {resultRows.map((r) => (
                <React.Fragment key={r.title}>
                  <TableRow>
                    <TableCell $bold $left>
                      {r.title}
                    </TableCell>
                    <TableCell />
                    <TableCell />
                    <TableCell />
                    <TableCell />
                    <TableCell />
                  </TableRow>
                  <TableRow>
                    <TableCell $left>5 Kozma Dominik</TableCell>
                    <TableCell>{r.hr}</TableCell>
                    <TableCell>
                      <ZoneBar>
                        {r.zones.map((w, i) => (
                          <ZoneSegment key={i} $width={w} $color={zoneColors[i]} />
                        ))}
                      </ZoneBar>
                    </TableCell>
                    <TableCell>{r.load}</TableCell>
                    <TableCell>{r.kcal}</TableCell>
                    <TableCell>{r.time}</TableCell>
                  </TableRow>
                </React.Fragment>
              ))}
            </SummaryTable>
          </MainColumn>
        </Body>
      </TabPanel>

      <MouseCursor viewBox="0 0 14 22">
        <path d="M1 1 V17 L5 13 L8 20 L11 19 L8 12 L13 12 Z" fill="#fff" stroke="#000" strokeWidth="1" />
      </MouseCursor>
    </Window>
  );
}

export default App;
